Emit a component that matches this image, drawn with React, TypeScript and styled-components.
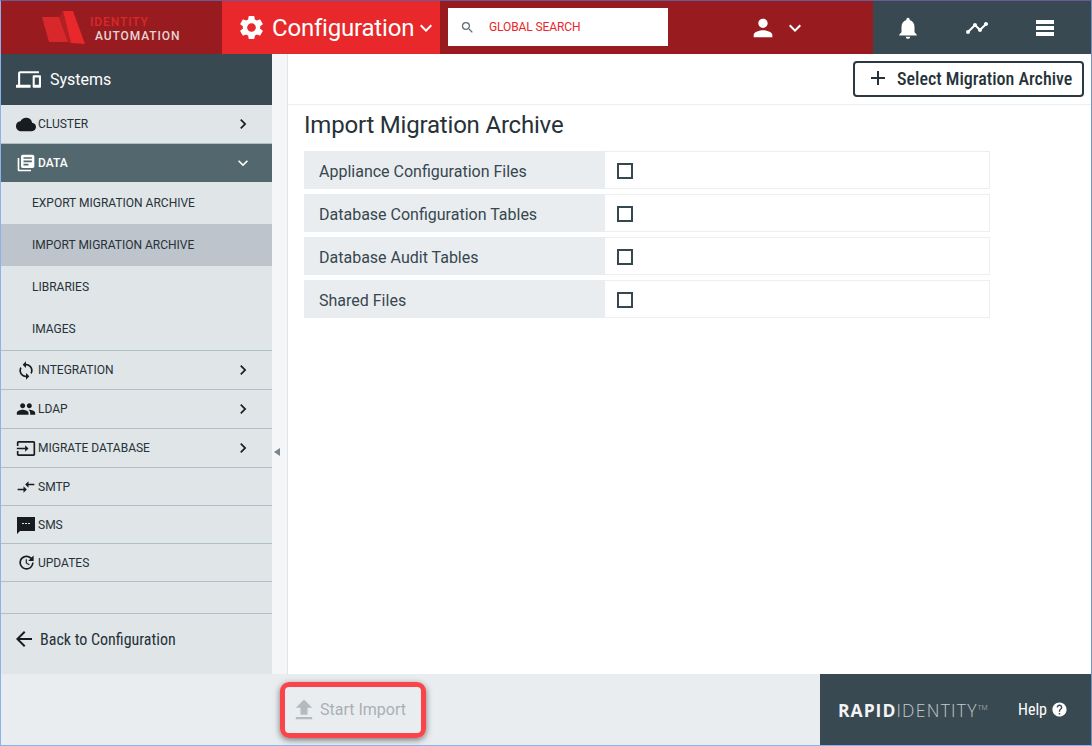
import React from "react";
import styled, { createGlobalStyle } from "styled-components";
import {
  MdSettings, MdExpandMore, MdSearch, MdPerson, MdNotifications, MdTimeline, MdTableRows, MdAdd,
  MdCloud, MdChevronRight, MdLibraryBooks, MdSync, MdPeople, MdInput, MdCompareArrows,
  MdUpdate, MdArrowBack, MdFileUpload, MdHelp, MdDevices,
} from "react-icons/md";

const Global = createGlobalStyle`
  html, body { margin: 0; padding: 0; background: #fff; }
  * { box-sizing: border-box; }
`;

const Frame = styled.div`
  width: 1092px;
  height: 746px;
  display: flex;
  flex-direction: column;
  overflow: hidden;
  font-family: Roboto, "Liberation Sans", sans-serif;
  color: #263238;
  border: 1px solid #8ab2ee;
  border-top-color: #6a5a9a;
  border-right-color: #6f93c9;
`;

const Header = styled.header`
  height: 53px;
  flex: none;
  display: flex;
  background: #981c1f;
`;

const LogoBlock = styled.div`
  width: 221px;
  display: flex;
  align-items: center;
  padding-left: 41px;
  gap: 5px;
`;

const LogoWords = styled.div`
  display: flex;
  flex-direction: column;
  font-size: 12px;
  line-height: 14.2px;
  font-weight: 500;
  margin-top: 3px;
`;

const LogoTop = styled.span`
  color: #d9282c;
  letter-spacing: 0.9px;
  margin-left: -5px;
`;

const LogoBottom = styled.span`
  color: #e5d5d5;
  letter-spacing: 0.9px;
`;

const ModuleBlock = styled.div`
  width: 218px;
  background: #e8282b;
  color: #fff;
  display: flex;
  align-items: center;
  padding-left: 15px;
  font-size: 24px;
  letter-spacing: -0.2px;
`;

const ModuleName = styled.span`
  margin-left: 6px;
`;

const SearchBox = styled.div`
  width: 220px;
  height: 38px;
  margin: 7px 0 0 8px;
  background: #fff;
  display: flex;
  align-items: center;
  padding-left: 12px;
  gap: 14px;
  font-size: 12px;
  color: #e8282b;
  letter-spacing: -0.1px;
`;

const UserBlock = styled.div`
  width: 205px;
  display: flex;
  align-items: center;
  justify-content: flex-end;
  padding-right: 66px;
  gap: 6px;
  color: #fff;
`;

const ToolBlock = styled.div`
  flex: 1;
  background: #394951;
  color: #fff;
  display: flex;
  align-items: center;
  padding-left: 23px;
  gap: 44.5px;
`;

const ToolSlot = styled.span`
  width: 24px;
  height: 24px;
  display: flex;
  align-items: center;
  justify-content: center;
  & > svg {
    flex: none;
  }
`;

const Middle = styled.div`
  flex: 1;
  min-height: 0;
  display: flex;
`;

const Sidebar = styled.nav`
  width: 271px;
  flex: none;
  background: #e0e5e8;
  display: flex;
  flex-direction: column;
`;

const SystemsBar = styled.div`
  height: 51px;
  background: #394951;
  color: #fff;
  display: flex;
  align-items: center;
  padding-left: 15px;
  gap: 9px;
  font-size: 16px;
  flex: none;
`;

const NavRow = styled.div<{ $h: number; $active?: boolean; $line?: boolean }>`
  height: ${(p) => p.$h}px;
  flex: none;
  display: flex;
  align-items: center;
  padding-left: 15px;
  padding-right: 19px;
  font-size: 12px;
  color: ${(p) => (p.$active ? "#fff" : "#263238")};
  background: ${(p) => (p.$active ? "#52686e" : "transparent")};
  border-bottom: ${(p) => (p.$line ? "1px solid #b0bec5" : "none")};
`;

const NavIcon = styled.span`
  width: 22px;
  padding-right: 2px;
  display: flex;
  align-items: center;
  justify-content: center;
  color: #161c20;
  flex: none;
`;

const NavIconLight = styled(NavIcon)`
  color: #fff;
`;

const NavLabel = styled.span<{ $strong?: boolean }>`
  flex: 1;
  font-weight: ${(p) => (p.$strong ? 500 : 400)};
`;

const SubRow = styled.div<{ $selected?: boolean }>`
  height: 42px;
  flex: none;
  display: flex;
  align-items: center;
  padding-left: 31px;
  font-size: 12px;
  color: #263238;
  background: ${(p) => (p.$selected ? "#bec4cb" : "transparent")};
`;

const SubGroup = styled.div`
  border-bottom: 1px solid #b0bec5;
`;

const Spacer = styled.div`
  height: 32px;
  flex: none;
  border-bottom: 1px solid #b0bec5;
`;

const BackRow = styled.div`
  flex: 1;
  display: flex;
  align-items: center;
  padding: 0 0 10px 11px;
  gap: 4px;
  font-size: 16px;
  font-stretch: 87%;
  color: #263238;
`;

const Gutter = styled.div`
  width: 16px;
  flex: none;
  background: #f4f6f8;
  border-right: 1px solid #e2e5e8;
  position: relative;
`;

const CollapseMark = styled.span`
  position: absolute;
  left: 2px;
  top: 394px;
  width: 0;
  height: 0;
  border-top: 4px solid transparent;
  border-bottom: 4px solid transparent;
  border-right: 6px solid #78858c;
`;

const Main = styled.main`
  flex: 1;
  min-width: 0;
  display: flex;
  flex-direction: column;
  background: #fff;
`;

const ActionBar = styled.div`
  height: 51px;
  flex: none;
  border-bottom: 1px solid #eceef0;
  display: flex;
  justify-content: flex-end;
  align-items: flex-start;
  padding: 7px 7px 0 0;
`;

const SelectButton = styled.button`
  width: 231px;
  height: 36px;
  border: 2px solid #2b3a42;
  border-radius: 4px;
  background: #fff;
  color: #263238;
  display: flex;
  align-items: center;
  padding: 0 0 2px 11px;
  gap: 7px;
  font-family: inherit;
  font-size: 18px;
  font-stretch: 87%;
  font-weight: 500;
  white-space: nowrap;
`;

const Content = styled.section`
  padding: 5px 0 0 16px;
`;

const Title = styled.h1`
  margin: 0 0 11px;
  font-size: 24px;
  line-height: 30px;
  font-weight: 400;
  letter-spacing: -0.2px;
  color: #263238;
`;

const OptionList = styled.div`
  width: 686px;
  display: flex;
  flex-direction: column;
  gap: 5px;
`;

const OptionRow = styled.div`
  height: 38px;
  display: flex;
  border: 1px solid #eceef0;
  border-left: none;
`;

const OptionLabel = styled.div`
  width: 301px;
  margin: -1px 0;
  background: #eaedf0;
  display: flex;
  align-items: center;
  padding: 2px 0 0 15px;
  font-size: 16px;
  color: #37474f;
`;

const OptionValue = styled.div`
  display: flex;
  align-items: center;
  padding: 2px 0 0 12px;
`;

const Check = styled.span`
  width: 16px;
  height: 16px;
  border: 2px solid #37474f;
  display: block;
`;

const Footer = styled.footer`
  height: 71px;
  flex: none;
  background: #e9edf0;
  display: flex;
  align-items: center;
`;

const FooterLeft = styled.div`
  width: 819px;
  padding-left: 279px;
`;

const StartButton = styled.button`
  width: 146px;
  height: 56px;
  border: 5px solid #fb4449;
  border-radius: 9px;
  background: transparent;
  box-shadow: 0 2px 6px rgba(0, 0, 0, 0.5);
  color: #a9b0b5;
  display: flex;
  align-items: center;
  padding: 0 0 0 5px;
  gap: 2px;
  font-family: inherit;
  font-size: 16px;
`;

const BrandPanel = styled.div`
  flex: 1;
  height: 100%;
  background: #394951;
  color: #fff;
  display: flex;
  align-items: center;
  padding-left: 18px;
`;

const Brand = styled.div`
  width: 180px;
  font-family: "Open Sans", sans-serif;
  font-size: 17.5px;
  font-weight: 300;
  letter-spacing: 1.3px;
  white-space: nowrap;
  color: #c4c9cc;
`;

const BrandBold = styled.b`
  color: #f2f3f4;
  font-weight: 700;
  letter-spacing: 1px;
`;

const Tm = styled.sup`
  font-size: 7px;
  letter-spacing: 0;
  vertical-align: 7px;
  line-height: 0;
`;

const Help = styled.div`
  display: flex;
  align-items: center;
  gap: 4px;
  font-size: 16px;
  font-stretch: 87%;
`;

const LogoMark = () => (
  <svg width="48" height="36" viewBox="0 0 48 36">
    <polygon points="0,7 17,7 26,32 7,32" fill="#d9282c" />
    <polygon points="17,7 21,1 29,33 26,32" fill="#b32024" />
    <polygon points="21,1 31,1 43,34 29,33" fill="#e8282b" />
  </svg>
);

const SmsIcon = () => (
  <svg width="20" height="20" viewBox="0 0 20 20">
    <path d="M1 2h18v14H4l-3 3z" fill="currentColor" />
    <path d="M6 8.5h2M9 8.5h2M12 8.5h2" stroke="#e0e5e8" strokeWidth="1.2" />
  </svg>
);

type NavItem = { icon: React.ReactNode; label: string; h: number; arrow?: boolean };

const after: NavItem[] = [
  { icon: <MdSync size={21} />, label: "INTEGRATION", h: 39, arrow: true },
  { icon: <MdPeople size={20} />, label: "LDAP", h: 39, arrow: true },
  { icon: <MdInput size={21} />, label: "MIGRATE DATABASE", h: 39, arrow: true },
  { icon: <MdCompareArrows size={20} />, label: "SMTP", h: 38 },
  { icon: <SmsIcon />, label: "SMS", h: 38 },
  { icon: <MdUpdate size={19} />, label: "UPDATES", h: 38 },
];

const options = [
  "Appliance Configuration Files",
  "Database Configuration Tables",
  "Database Audit Tables",
  "Shared Files",
];

export default function App() {
  return (
    <Frame>
      <Global />
      <Header>
        <LogoBlock>
          <LogoMark />
          <LogoWords>
            <LogoTop>IDENTITY</LogoTop>
            <LogoBottom>AUTOMATION</LogoBottom>
          </LogoWords>
        </LogoBlock>
        <ModuleBlock>
          <MdSettings size={29} />
          <ModuleName>Configuration</ModuleName>
          <MdExpandMore size={24} />
        </ModuleBlock>
        <SearchBox>
          <MdSearch size={15} color="#5d6b73" />
          GLOBAL SEARCH
        </SearchBox>
        <UserBlock>
          <MdPerson size={28} />
          <MdExpandMore size={24} />
        </UserBlock>
        <ToolBlock>
          <ToolSlot><MdNotifications size={26} /></ToolSlot>
          <ToolSlot><MdTimeline size={24} /></ToolSlot>
          <ToolSlot><MdTableRows size={24} /></ToolSlot>
        </ToolBlock>
      </Header>
      <Middle>
        <Sidebar>
          <SystemsBar>
            <MdDevices size={25} />
            Systems
          </SystemsBar>
          <NavRow $h={39} $line>
            <NavIcon><MdCloud size={21} /></NavIcon>
            <NavLabel>CLUSTER</NavLabel>
            <MdChevronRight size={20} color="#161c20" />
          </NavRow>
          <NavRow $h={38} $active>
            <NavIconLight><MdLibraryBooks size={22} /></NavIconLight>
            <NavLabel $strong>DATA</NavLabel>
            <MdExpandMore size={20} />
          </NavRow>
          <SubGroup>
            <SubRow>EXPORT MIGRATION ARCHIVE</SubRow>
            <SubRow $selected>IMPORT MIGRATION ARCHIVE</SubRow>
            <SubRow>LIBRARIES</SubRow>
            <SubRow>IMAGES</SubRow>
          </SubGroup>
          {after.map((n) => (
            <NavRow key={n.label} $h={n.h} $line>
              <NavIcon>{n.icon}</NavIcon>
              <NavLabel>{n.label}</NavLabel>
              {n.arrow && <MdChevronRight size={20} color="#161c20" />}
            </NavRow>
          ))}
          <Spacer />
          <BackRow>
            <MdArrowBack size={24} color="#161c20" />
            Back to Configuration
          </BackRow>
        </Sidebar>
        <Gutter><CollapseMark /></Gutter>
        <Main>
          <ActionBar>
            <SelectButton>
              <MdAdd size={24} />
              Select Migration Archive
            </SelectButton>
          </ActionBar>
          <Content>
            <Title>Import Migration Archive</Title>
            <OptionList>
              {options.map((o) => (
                <OptionRow key={o}>
                  <OptionLabel>{o}</OptionLabel>
                  <OptionValue><Check /></OptionValue>
                </OptionRow>
              ))}
            </OptionList>
          </Content>
        </Main>
      </Middle>
      <Footer>
        <FooterLeft>
          <StartButton>
            <MdFileUpload size={28} color="#b4babd" />
            Start Import
          </StartButton>
        </FooterLeft>
        <BrandPanel>
          <Brand>
            <BrandBold>RAPID</BrandBold>IDENTITY<Tm>TM</Tm>
          </Brand>
          <Help>
            Help
            <MdHelp size={17} />
          </Help>
        </BrandPanel>
      </Footer>
    </Frame>
  );
}
